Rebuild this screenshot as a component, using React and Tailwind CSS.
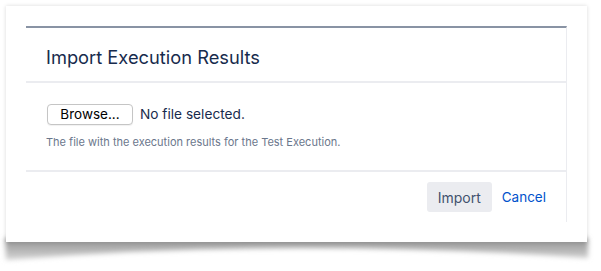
import React from 'react';

const font = { fontFamily: '"Inter", "Liberation Sans", sans-serif' };

const CurlShadow = () => (
  <svg className="absolute left-0 top-[228px] w-[601px] h-[43px]" viewBox="0 0 601 43">
    <defs>
      <filter id="blur" x="-10%" y="-50%" width="120%" height="200%">
        <feGaussianBlur stdDeviation="2.5" />
      </filter>
      <linearGradient id="fade" x1="0" y1="0" x2="0" y2="1">
        <stop offset="0" stopColor="#8f8f8f" />
        <stop offset="1" stopColor="#d6d6d6" />
      </linearGradient>
    </defs>
    <path d="M5 10 L588 10 L588 30 Q450 20 300 20 Q150 20 6 32 Z" fill="url(#fade)" filter="url(#blur)" />
  </svg>
);

export default function App() {
  return (
    <div className="relative w-[601px] h-[271px] bg-white overflow-hidden" style={font}>
      <CurlShadow />
      <div className="relative ml-[6px] mt-[6px] w-[581px] h-[236px] bg-white p-5 shadow-[0_0_4px_rgba(0,0,0,0.15)]">
        <div className="flex flex-col h-[196px] border-t-2 border-t-[#8993a4] border-r border-r-[#ebecf0]">
          <div className="h-[55px] flex items-center pt-[6px] px-5 border-b-2 border-[#ebecf0]">
            <h1 className="text-[18.3px] text-[#172b4d] leading-none">Import Execution Results</h1>
          </div>
          <div className="flex-1 px-5 pt-[21px] border-b-2 border-[#ebecf0]">
            <div className="flex items-center gap-[7px]">
              <div className="ml-px w-[86px] h-[21px] border border-[#c5c5c5] rounded-[4px] bg-white flex items-center justify-center text-[13.5px] text-black shadow-[0_1px_1px_rgba(0,0,0,0.06)]">
                Browse...
              </div>
              <span className="text-[13.7px] text-[#172b4d]">No file selected.</span>
            </div>
            <p className="mt-[9px] text-[11px] text-[#6b778c]">The file with the execution results for the Test Execution.</p>
          </div>
          <div className="h-[50px] flex items-center justify-end gap-[10px] pr-5">
            <div className="w-[65px] h-[30px] rounded-[3px] bg-[#ebecf0] flex items-center justify-center text-[14px] text-[#42526e]">
              Import
            </div>
            <span className="text-[13.5px] text-[#0052cc]">Cancel</span>
          </div>
        </div>
      </div>
    </div>
  );
}
